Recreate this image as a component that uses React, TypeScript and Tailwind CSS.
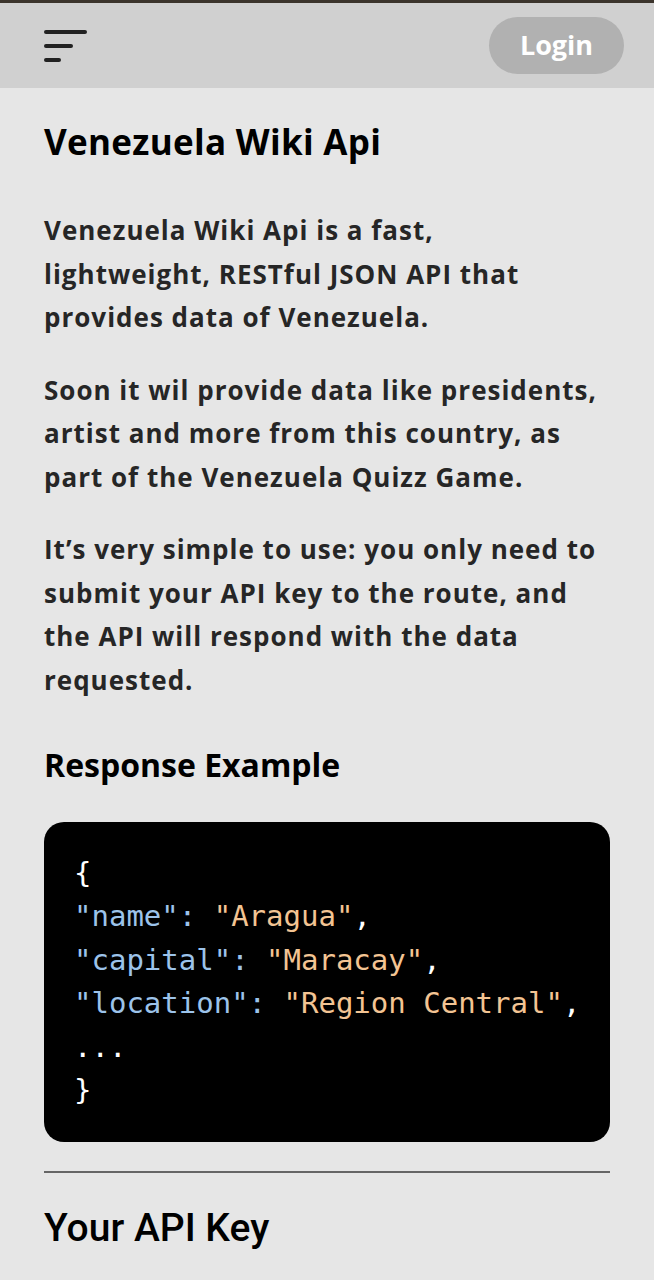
import React from "react";

export default function App() {
  return (
    <div className="min-h-[1280px] bg-[#e6e6e6]">
      <div className="h-[3px] bg-[#3b342c]" />
      <header className="flex h-[85px] items-center justify-between bg-[#d0d0d0] pl-[44px] pr-[30px]">
        <div className="flex flex-col gap-[10px]">
          <div className="h-[4px] w-[43px] rounded-full bg-[#222]" />
          <div className="h-[4px] w-[29px] rounded-full bg-[#222]" />
          <div className="h-[4px] w-[17px] rounded-full bg-[#222]" />
        </div>
        <button className="flex h-[57px] w-[135px] items-center justify-center rounded-full bg-[#b1b1b1] font-['Open_Sans',sans-serif] text-[27px] font-bold text-white">
          Login
        </button>
      </header>
      <main className="px-[44px] font-['Open_Sans',sans-serif]">
        <h1 className="pt-[30px] text-[35px] font-bold leading-[48px] tracking-[0.3px] text-black">Venezuela Wiki Api</h1>
        <p className="mt-[43px] text-[26px] font-bold leading-[43.5px] tracking-[1px] text-[#262626]">
          Venezuela Wiki Api is a fast,
          <br />
          lightweight, RESTful JSON API that
          <br />
          provides data of Venezuela.
        </p>
        <p className="mt-[29px] text-[26px] font-bold leading-[43.5px] tracking-[1px] text-[#262626]">
          Soon it wil provide data like presidents,
          <br />
          artist and more from this country, as
          <br />
          part of the Venezuela Quizz Game.
        </p>
        <p className="mt-[29px] text-[26px] font-bold leading-[43.5px] tracking-[1px] text-[#262626]">
          It’s very simple to use: you only need to
          <br />
          submit your API key to the route, and
          <br />
          the API will respond with the data
          <br />
          requested.
        </p>
        <h2 className="mt-[39px] text-[32px] font-bold leading-[48px] text-black">Response Example</h2>
        <div className="mt-[33px] rounded-[20px] bg-black px-[30px] py-[30px] font-['DejaVu_Sans_Mono',monospace] text-[29px] leading-[43.4px] whitespace-nowrap text-white">
          <div>{"{"}</div>
          <div>
            <span className="text-[#9cc3ea]">"name"</span>
            <span className="text-[#9cc3ea]">: </span>
            <span className="text-[#f3c493]">"Aragua"</span>,
          </div>
          <div>
            <span className="text-[#9cc3ea]">"capital"</span>
            <span className="text-[#9cc3ea]">: </span>
            <span className="text-[#f3c493]">"Maracay"</span>,
          </div>
          <div>
            <span className="text-[#9cc3ea]">"location"</span>
            <span className="text-[#9cc3ea]">: </span>
            <span className="text-[#f3c493]">"Region Central"</span>,
          </div>
          <div>...</div>
          <div>{"}"}</div>
        </div>
        <hr className="mt-[29px] border-t-[2px] border-[#666]" />
        <h2 className="mt-[31px] font-['Roboto',sans-serif] text-[39px] font-medium leading-[48px] text-black">Your API Key</h2>
      </main>
    </div>
  );
}
